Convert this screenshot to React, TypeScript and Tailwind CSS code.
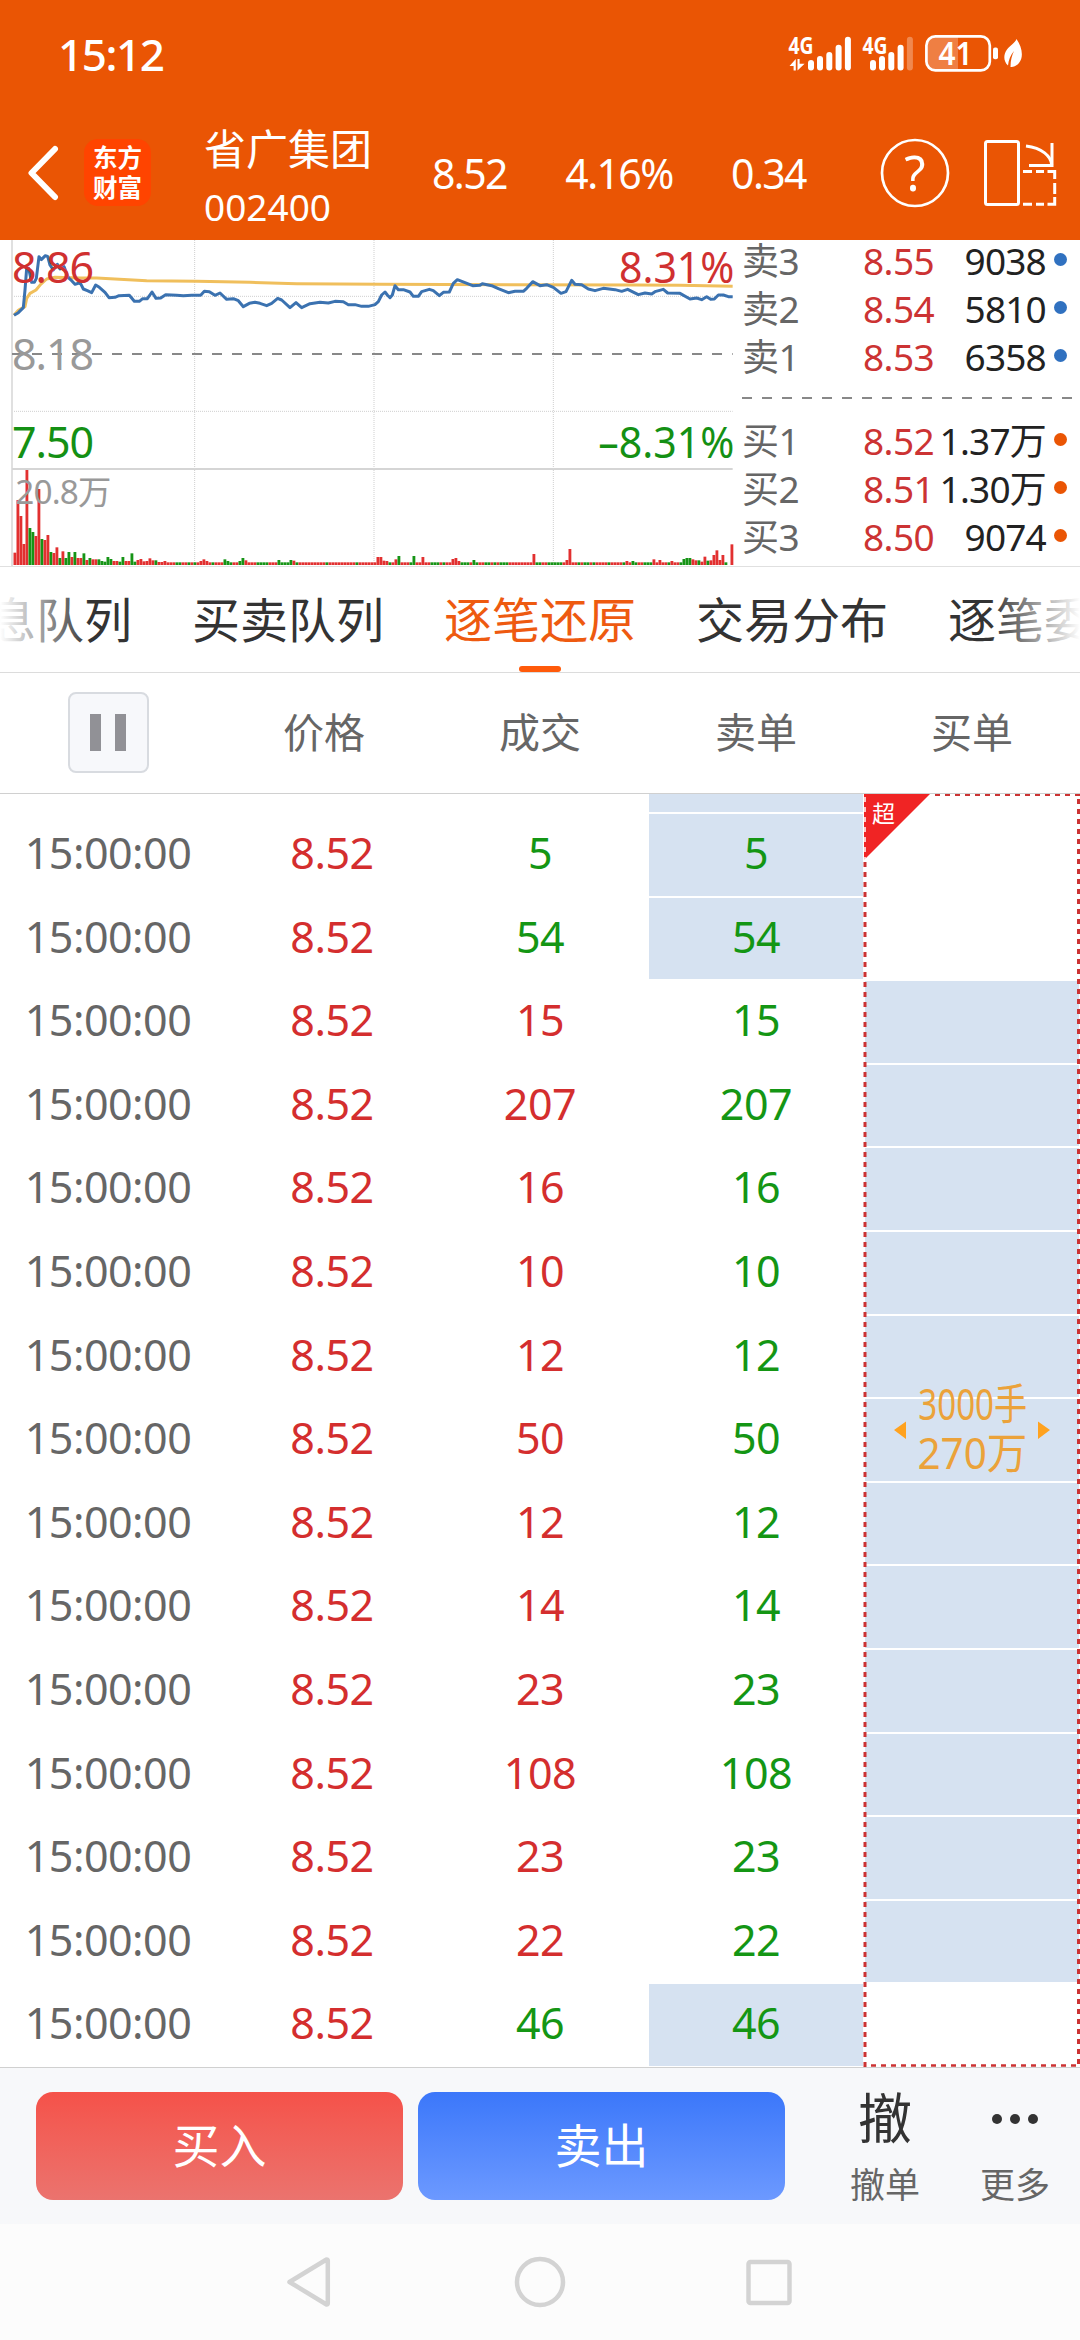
type Level = { label: string; price: string; qty: string };
type Row = { deal: string; side: "buy" | "sell" };

const sells: Level[] = [
    { label: "卖3", price: "8.55", qty: "9038" },
    { label: "卖2", price: "8.54", qty: "5810" },
    { label: "卖1", price: "8.53", qty: "6358" },
];

const buys: Level[] = [
    { label: "买1", price: "8.52", qty: "1.37万" },
    { label: "买2", price: "8.51", qty: "1.30万" },
    { label: "买3", price: "8.50", qty: "9074" },
];

const rows: Row[] = [
    { deal: "5", side: "sell" },
    { deal: "54", side: "sell" },
    { deal: "15", side: "buy" },
    { deal: "207", side: "buy" },
    { deal: "16", side: "buy" },
    { deal: "10", side: "buy" },
    { deal: "12", side: "buy" },
    { deal: "50", side: "buy" },
    { deal: "12", side: "buy" },
    { deal: "14", side: "buy" },
    { deal: "23", side: "buy" },
    { deal: "108", side: "buy" },
    { deal: "23", side: "buy" },
    { deal: "22", side: "buy" },
    { deal: "46", side: "sell" },
];

// chart units are a third of a pixel
const priceLine =
    "42,241 55,233 70,218 75,165 80,100 86,100 95,142 103,142 109,130 117,65 124,74 136,62 143,64 150,90 160,105 172,88 180,102 192,95 205,128 215,137 225,148 237,144 243,148 250,162 262,167 275,173 287,150 298,157 315,172 327,188 345,187 357,182 388,181 403,199 418,199 428,191 442,191 456,171 468,190 482,189 497,179 530,181 550,182 575,181 602,181 613,169 628,170 645,181 660,174 680,193 700,191 715,197 730,215 748,205 765,202 780,205 800,212 815,205 833,190 845,195 870,218 888,203 905,218 930,206 960,202 985,204 1005,199 1030,200 1045,209 1065,209 1085,214 1105,214 1125,209 1135,200 1145,180 1155,171 1162,180 1170,188 1177,180 1185,152 1195,164 1210,164 1230,171 1240,184 1255,184 1265,170 1288,163 1300,167 1318,182 1330,172 1348,171 1360,145 1372,134 1395,143 1418,152 1440,151 1447,146 1475,152 1495,161 1525,173 1545,169 1570,169 1580,160 1598,140 1620,152 1640,149 1660,157 1683,175 1698,170 1715,136 1725,148 1745,149 1765,162 1785,167 1810,160 1845,164 1865,169 1883,163 1915,179 1935,174 1955,177 1965,170 1990,163 2003,174 2040,175 2070,192 2090,189 2105,194 2120,185 2132,193 2143,192 2155,180 2170,180 2185,185 2198,185";

const averageLine =
    "42,241 55,226 65,220 75,215 80,190 90,175 108,165 122,148 140,132 165,127 240,129 290,129 440,137 590,139 750,142 890,146 1140,148 1910,150 2040,151 2198,154";

const openVolume = [
    37, 195, 147, 63, 285, 111, 99, 87, 228, 78, 75, 90, 39, 36, 53, 21, 41, 21, 39, 24, 39, 21, 21, 35, 15, 21, 17, 17, 17,
    12, 10, 24, 18, 12, 12, 10, 24, 12, 12, 35, 10, 15, 18, 11, 12, 20, 14, 14, 9, 9, 12,
];

const spikes: Record<number, number> = {
    62: 12, 63: 17, 64: 12, 70: 17, 71: 12, 75: 12, 76: 21, 77: 14, 88: 15, 92: 15, 93: 13,
    121: 24, 122: 24, 123: 13, 124: 12, 127: 17, 128: 27, 133: 27, 136: 24, 146: 18, 147: 21, 148: 12, 153: 15,
    173: 33, 184: 15, 185: 48, 204: 12, 206: 12, 213: 17, 215: 15, 219: 12, 223: 18, 224: 21, 225: 21, 226: 17, 227: 14,
    228: 14, 229: 10, 230: 25, 231: 13, 232: 14, 233: 30, 234: 44, 235: 15, 236: 30, 237: 8, 238: 0, 239: 62,
};

const greenBars = new Set([
    5, 6, 9, 12, 15, 17, 18, 20, 23, 25, 28, 29, 30, 31, 32, 35, 36, 39, 40, 47, 54, 55, 58, 60, 66, 70, 71, 72, 75, 76,
    81, 82, 83, 84, 88, 89, 90, 91, 92, 94, 104, 114, 125, 128, 132, 133, 139, 140, 141, 143, 149, 150, 151, 153, 154, 157,
    158, 160, 162, 163, 164, 174, 175, 178, 179, 180, 181, 182, 188, 190, 191, 193, 198, 203, 206, 207, 210, 211, 212,
    218, 222, 223, 224, 225, 228, 231, 237,
]);

const volume = Array.from({ length: 240 }, (_, i) => openVolume[i] ?? spikes[i] ?? 8);

function StatusBar() {
    return (
        <div className="flex h-[107px] items-center justify-between pl-[58px] pr-[56px]">
            <span className="text-[44px] font-medium leading-none tracking-[-1.4px]">15:12</span>
            <svg className="overflow-visible" width="236" height="40" viewBox="788 34 236 40" fill="#fff">
                <g fontSize="23" fontWeight="700">
                    <text x="788.5" y="53.5" textLength="25" lengthAdjust="spacingAndGlyphs">4G</text>
                    <text x="862.5" y="53.5" textLength="25" lengthAdjust="spacingAndGlyphs">4G</text>
                </g>
                <path d="M789.5 66 L795.8 59 V70.5 H793.6 V66 Z M797.5 59 H799.6 V63.8 H804.6 L797.5 70.5 Z" />
                <rect x="808" y="60" width="6" height="10.5" rx="3" />
                <rect x="817" y="56" width="6" height="14.5" rx="3" />
                <rect x="826.3" y="52" width="6" height="18.5" rx="3" />
                <rect x="835.6" y="44.7" width="6" height="25.8" rx="3" />
                <rect x="844.9" y="36.7" width="6" height="33.8" rx="3" />
                <rect x="870" y="60" width="6" height="10.5" rx="3" />
                <rect x="879" y="56" width="6" height="14.5" rx="3" />
                <rect x="888.3" y="52" width="6" height="18.5" rx="3" />
                <rect x="897.6" y="44.7" width="6" height="25.8" rx="3" />
                <rect x="906.9" y="36.7" width="6" height="33.8" rx="3" opacity=".3" />
                <path d="M934 37 H958 V70 H934 Q927 70 927 62 V45 Q927 37 934 37 Z" opacity=".25" />
                <rect x="926.4" y="36.4" width="63.4" height="34" rx="9" fill="none" stroke="#fff" strokeWidth="2.7" />
                <text x="938.5" y="65" fontSize="32" fontWeight="600" textLength="34" lengthAdjust="spacingAndGlyphs">41</text>
                <rect x="993" y="47.6" width="5" height="11.6" rx="2" />
                <path d="M1016.5 39 C1022 47 1024 57 1019 63 C1016.5 66 1013 67.5 1010.5 67 C1010.5 60 1012 55 1014 51 C1010.5 55 1008.5 60 1008 65.5 C1003 61 1003.5 54 1007 49.5 C1010 45.5 1015 43 1016.5 39 Z" />
            </svg>
        </div>
    );
}

function TitleBar() {
    return (
        <div className="flex h-[131px] items-center">
            <svg className="ml-7" width="32" height="56" viewBox="0 0 32 56" fill="none" stroke="#fff" strokeWidth="6" strokeLinecap="round" strokeLinejoin="round">
                <path d="M27 4 L3.5 28 L27 52" />
            </svg>
            <div className="ml-6 flex h-[67px] w-[67px] flex-col items-center justify-center rounded-[14px] bg-[#ff4400] text-[24.5px] font-bold leading-[30px]">
                <span>东方</span>
                <span>财富</span>
            </div>
            <div className="ml-[53px] w-[228px] pt-2.5">
                <div className="text-[42px] leading-[58px]">省广集团</div>
                <div className="text-[37px] leading-[58px]">002400</div>
            </div>
            <div className="flex w-[374px] justify-between pt-0.5 text-[41px] leading-none tracking-[-1.6px]">
                <span>8.52</span>
                <span>4.16%</span>
                <span>0.34</span>
            </div>
            <svg className="ml-[74px] overflow-visible" width="70" height="70" viewBox="0 0 70 70">
                <circle cx="35" cy="35" r="33" fill="none" stroke="#fff" strokeWidth="2.7" />
                <text x="35" y="53" textAnchor="middle" fill="#fff" fontSize="49">?</text>
            </svg>
            <svg className="ml-8" width="76" height="68" viewBox="980 138 76 68" fill="none" stroke="#fff" strokeWidth="3">
                <rect x="983.5" y="140.5" width="33" height="63" rx="2" />
                <path d="M1024 145 C1040 147 1049 155 1049.7 164" />
                <path d="M1050 142 V164.5 H1027" />
                <path d="M1021 170.5 H1030 M1034 170.5 H1042 M1045.5 170.5 H1052.7 V178 M1052.7 182 V193 M1052.7 196 V203.3 H1045.5 M1021 203.3 H1030 M1034 203.3 H1042" />
            </svg>
        </div>
    );
}

function Chart() {
    return (
        <svg className="shrink-0 overflow-visible" width="740" height="326" viewBox="0 15 2220 978">
            <g stroke="#cfcfcf" strokeWidth="3" strokeDasharray="3 3">
                <path d="M584 15 V990 M1122 15 V990 M1660 15 V990" />
                <path d="M36 184 H2198 M36 529 H2198" />
            </g>
            <path d="M36 15 V993" stroke="#e0e0e0" strokeWidth="6" />
            <path d="M36 702 H2198" stroke="#d5d5d5" strokeWidth="6" />
            <path d="M36 357 H2198" stroke="#888" strokeWidth="6" strokeDasharray="30 30" />
            {volume.map((h, i) => (
                <rect key={i} x={40.5 + i * 9} y={990 - h} width="8.5" height={h} fill={greenBars.has(i) ? "#169416" : "#e23030"} />
            ))}
            <polyline points={averageLine} fill="none" stroke="#f0bf5c" strokeWidth="9" strokeLinejoin="round" />
            <polyline points={priceLine} fill="none" stroke="#3b72b0" strokeWidth="9" strokeLinejoin="round" />
            <g fontSize="129">
                <text x="36" y="143" fill="#d03030" textLength="246">8.86</text>
                <text x="36" y="404" fill="#999" textLength="246">8.18</text>
                <text x="36" y="668" fill="#149014" textLength="246">7.50</text>
                <text x="1857" y="143" fill="#d03030" textLength="346" lengthAdjust="spacingAndGlyphs">8.31%</text>
                <text x="1795" y="668" fill="#149014" textLength="408" lengthAdjust="spacingAndGlyphs">–8.31%</text>
            </g>
            <text x="46" y="808" fill="#999" fontSize="100" textLength="288">20.8万</text>
        </svg>
    );
}

function LevelRow({ level, dot }: { level: Level; dot: string }) {
    return (
        <div className="flex h-12 items-center text-[37px] leading-none tracking-[-0.6px]">
            <span className="w-[121px] text-[#666]">{level.label}</span>
            <span className="text-[#cc3333]">{level.price}</span>
            <span className="flex-1 text-right tracking-[-0.8px] text-[#222]">{level.qty}</span>
            <span className={`-mt-0.5 ml-2 mr-[13px] h-[13px] w-[13px] rounded-full ${dot}`} />
        </div>
    );
}

function OrderBook() {
    return (
        <div className="-mt-1 flex-1 pl-0.5">
            {sells.map((l) => (
                <LevelRow key={l.label} level={l} dot="bg-[#3071c0]" />
            ))}
            <svg className="block" width="338" height="36">
                <path d="M0 18 H330" stroke="#888" strokeWidth="2" strokeDasharray="10 10" />
            </svg>
            {buys.map((l) => (
                <LevelRow key={l.label} level={l} dot="bg-[#ea5504]" />
            ))}
        </div>
    );
}

function Tabs() {
    return (
        <div className="relative flex h-[106px] gap-[60px] overflow-hidden whitespace-nowrap border-b border-[#dcdcdc] text-[48px] leading-[106px] text-[#333]">
            <span className="-ml-3">息队列</span>
            <span>买卖队列</span>
            <span className="relative text-[#ee5a10]">
                逐笔还原
                <i className="absolute bottom-0 left-[75px] h-1.5 w-[42px] rounded-full bg-[#ff5a0a]" />
            </span>
            <span>交易分布</span>
            <span>逐笔委</span>
            <div className="absolute left-0 top-0 h-[105px] w-[90px] bg-linear-to-r from-white to-transparent" />
            <div className="absolute right-0 top-0 h-[105px] w-[90px] bg-linear-to-l from-white to-transparent" />
        </div>
    );
}

function TableHead() {
    return (
        <div className="grid h-[121px] grid-cols-5 items-center border-b border-[#d0d0d0] text-center text-[41px] text-[#666]">
            <div className="mx-auto -mt-0.5 flex h-[81px] w-[81px] items-center justify-center gap-3.5 rounded-lg border-2 border-[#d8dbe0] bg-[#f7f8fb]">
                <i className="h-[37px] w-[11px] bg-[#919196]" />
                <i className="h-[37px] w-[11px] bg-[#919196]" />
            </div>
            <span>价格</span>
            <span>成交</span>
            <span>卖单</span>
            <span>买单</span>
        </div>
    );
}

function TradeRow({ row }: { row: Row }) {
    const sell = row.side === "sell";
    return (
        <div className="grid min-h-0 flex-1 grid-cols-5 text-center text-[43px] leading-[80px] tracking-[-0.5px]">
            <span className="text-[#666]">15:00:00</span>
            <span className="pl-4 text-[#d42e2e]">8.52</span>
            <span className={sell ? "text-[#149614]" : "text-[#d42e2e]"}>{row.deal}</span>
            <span className={`m-px leading-[78px] text-[#149614] ${sell ? "bg-[#d6e2f1]" : ""}`}>{row.deal}</span>
            <span className={`m-px ${sell ? "" : "bg-[#d6e2f1]"}`} />
        </div>
    );
}

function BigOrder() {
    return (
        <div className="absolute right-0 top-0 h-full w-[217px]">
            <svg className="absolute inset-0" width="217" height="1273" fill="none" stroke="#cc3333" strokeWidth="3">
                <path d="M1 0 H67 L1 66 Z" fill="#f02424" stroke="none" />
                <path d="M2 68 V1273" strokeDasharray="5 5" />
                <path d="M2 3 V66" stroke="#fff" strokeWidth="1.5" strokeDasharray="5 5" />
                <path d="M215.5 5 V1273" strokeDasharray="5 5" />
                <path d="M72 1 H217" strokeWidth="2" strokeDasharray="5 5" />
                <path d="M8 1271.5 H217" strokeWidth="2.5" strokeDasharray="5 5" />
                <path d="M31 636 L43 627.5 V645 Z M187 636 L175 627.5 V645 Z" fill="#ffa21f" stroke="none" />
            </svg>
            <span className="absolute left-[9px] top-2 text-[23px] leading-[23px] text-white">超</span>
            <div className="absolute inset-x-0 top-[585px] flex flex-col items-center pl-0.5 text-[43px] leading-[49px] text-[#eba23a]">
                <span className="scale-x-[.77]">3000手</span>
                <span className="scale-x-[.94]">270万</span>
            </div>
        </div>
    );
}

function TradeTable() {
    return (
        <div className="relative flex h-[1273px] flex-col">
            <div className="grid h-[19px] grid-cols-5">
                <span className="col-start-4 mx-px mb-px bg-[#d6e2f1]" />
            </div>
            {rows.map((r, i) => (
                <TradeRow key={i} row={r} />
            ))}
            <BigOrder />
        </div>
    );
}

function ActionBar() {
    return (
        <div className="flex h-[157px] border-t border-[#d0d0d0] bg-[#f7f8fa] pl-9 pt-6">
            <button className="h-[108px] w-[367px] rounded-[17px] bg-linear-to-b from-[#f55149] to-[#eb736e] pb-0.5 text-[47px] text-white">买入</button>
            <button className="ml-[15px] h-[108px] w-[367px] rounded-[17px] bg-linear-to-b from-[#3b77fa] to-[#6c99ff] pb-0.5 text-[47px] text-white">卖出</button>
            <div className="ml-[35px] flex w-[130px] flex-col items-center">
                <span className="text-[54px] leading-[53px] text-[#333]">撤</span>
                <span className="mt-[22px] text-[35px] leading-9 text-[#666]">撤单</span>
            </div>
            <div className="flex w-[130px] flex-col items-center">
                <div className="flex h-[53px] items-center gap-2">
                    <i className="h-2.5 w-2.5 rounded-full bg-[#333]" />
                    <i className="h-2.5 w-2.5 rounded-full bg-[#333]" />
                    <i className="h-2.5 w-2.5 rounded-full bg-[#333]" />
                </div>
                <span className="mt-[22px] text-[35px] leading-9 text-[#666]">更多</span>
            </div>
        </div>
    );
}

function NavBar() {
    return (
        <div className="flex h-[116px] items-center justify-center bg-[#fcfcfc]">
            <svg width="520" height="56" viewBox="280 2254 520 56" fill="none" stroke="#d3d3d3" strokeWidth="4.5" strokeLinejoin="round">
                <path d="M289.5 2282 L326.5 2259.5 Q327.8 2259.5 327.8 2261 V2303 Q327.8 2304.5 326.5 2304.5 Z" />
                <circle cx="540" cy="2282" r="23" />
                <rect x="748.5" y="2262" width="41" height="41" rx="2" />
            </svg>
        </div>
    );
}

export default function App() {
    return (
        <div className="h-[2340px] w-[1080px] overflow-hidden bg-white font-['Noto_Sans','Noto_Sans_CJK_SC',sans-serif]">
            <header className="h-60 bg-[#ea5504] text-white">
                <StatusBar />
                <TitleBar />
            </header>
            <section className="flex h-[327px] border-b border-[#e0e0e0]">
                <Chart />
                <OrderBook />
            </section>
            <Tabs />
            <TableHead />
            <TradeTable />
            <ActionBar />
            <NavBar />
        </div>
    );
}
